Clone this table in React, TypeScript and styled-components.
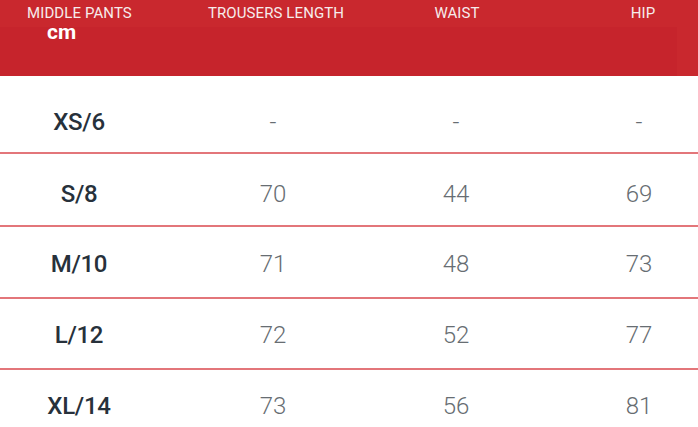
import React from "react";
import styled, { createGlobalStyle } from "styled-components";

const Global = createGlobalStyle`
  html, body { margin: 0; padding: 0; background: #ffffff; }
  body { font-family: Roboto, "Liberation Sans", sans-serif; }
`;

const Page = styled.div`
  width: 698px;
  height: 427px;
  overflow: hidden;
  background: #ffffff;
`;

const COLS = "158px 230px 136px 1fr";

const Header = styled.div`
  display: grid;
  grid-template-columns: ${COLS};
  height: 76px;
  box-sizing: border-box;
  padding-top: 4px;
  background: linear-gradient(#c6242c, #c6242c) 0 27px / 677px 49px no-repeat, #c9282e;
  color: #f6ecec;
`;

const HeadCell = styled.div<{ $shift?: number; $left?: number }>`
  display: flex;
  flex-direction: column;
  align-items: ${(p) => (p.$left !== undefined ? "flex-start" : "center")};
  padding-left: ${(p) => p.$left ?? 0}px;
  transform: translateX(${(p) => p.$shift ?? 0}px);
`;

const HeadLabel = styled.div`
  font-size: 15px;
  line-height: 18px;
  font-weight: 400;
  letter-spacing: 0.1px;
  white-space: nowrap;
`;

const Unit = styled.div`
  font-size: 21px;
  line-height: 20px;
  font-weight: 700;
  color: #ffffff;
  padding-left: 20px;
`;

const Row = styled.div<{ $h: number; $pad: number; $last?: boolean }>`
  display: grid;
  grid-template-columns: ${COLS};
  align-items: center;
  box-sizing: border-box;
  height: ${(p) => p.$h}px;
  padding-top: ${(p) => p.$pad}px;
  border-bottom: ${(p) => (p.$last ? "none" : "2px solid #e3767a")};
`;

const Size = styled.div`
  text-align: center;
  font-size: 24px;
  font-weight: 500;
  color: #27313b;
  letter-spacing: -0.3px;
`;

const Value = styled.div<{ $pad?: number }>`
  text-align: center;
  font-size: 24px;
  font-weight: 300;
  color: #676d72;
  padding-left: ${(p) => p.$pad ?? 0}px;
`;

const rows = [
  { size: "XS/6", v: ["-", "-", "-"], h: 78, pad: 16 },
  { size: "S/8", v: ["70", "44", "69"], h: 73, pad: 9 },
  { size: "M/10", v: ["71", "48", "73"], h: 72, pad: 4 },
  { size: "L/12", v: ["72", "52", "77"], h: 71, pad: 3 },
  { size: "XL/14", v: ["73", "56", "81"], h: 72, pad: 0 },
];

export default function App() {
  return (
    <Page>
      <Global />
      <Header>
        <HeadCell $left={27}>
          <HeadLabel>MIDDLE PANTS</HeadLabel>
          <Unit>cm</Unit>
        </HeadCell>
        <HeadCell $shift={3}>
          <HeadLabel>TROUSERS LENGTH</HeadLabel>
        </HeadCell>
        <HeadCell $shift={1}>
          <HeadLabel>WAIST</HeadLabel>
        </HeadCell>
        <HeadCell $shift={32}>
          <HeadLabel>HIP</HeadLabel>
        </HeadCell>
      </Header>
      {rows.map((r, i) => (
        <Row key={r.size} $h={r.h} $pad={r.pad} $last={i === rows.length - 1}>
          <Size>{r.size}</Size>
          <Value>{r.v[0]}</Value>
          <Value>{r.v[1]}</Value>
          <Value $pad={56}>{r.v[2]}</Value>
        </Row>
      ))}
    </Page>
  );
}
